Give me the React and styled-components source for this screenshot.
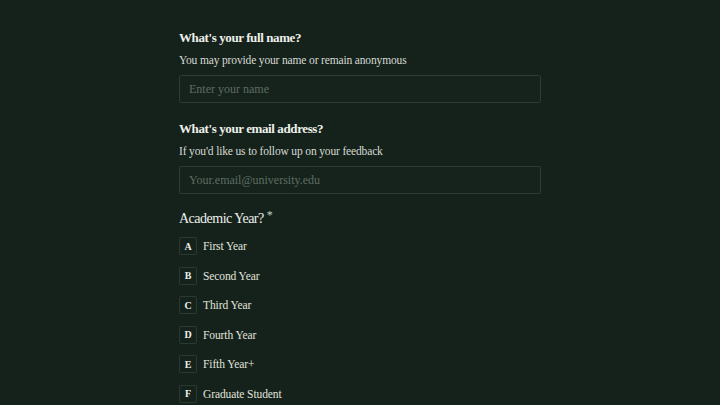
import React from "react";
import styled, { createGlobalStyle } from "styled-components";

const Global = createGlobalStyle`
  html, body { margin: 0; padding: 0; background: #15221c; }
  body { font-family: "Liberation Serif", "DejaVu Serif", serif; color: #e6e9e2; }
`;

const Page = styled.div`
  min-height: 405px;
  background: #15221c;
  display: flex;
  justify-content: center;
  padding-top: 28px;
  box-sizing: border-box;
`;

const Form = styled.div`
  width: 362px;
  display: flex;
  flex-direction: column;
`;

const Field = styled.div`
  display: flex;
  flex-direction: column;
  margin-bottom: ${(p) => p.$mb || 15}px;
`;

const Heading = styled.h2`
  margin: 0 0 ${(p) => p.$gap ?? 3}px;
  font-size: ${(p) => p.$size || 13}px;
  line-height: ${(p) => p.$lh || 20}px;
  font-weight: ${(p) => p.$weight || 700};
  letter-spacing: ${(p) => p.$ls ?? -0.4}px;
  color: #eef0ea;
`;

const Star = styled.sup`
  font-size: 12px;
  font-weight: 400;
  color: #c9cec5;
  margin-left: 3px;
  vertical-align: 4px;
  line-height: 0;
`;

const Sub = styled.p`
  margin: 0 0 6px;
  font-size: 11.5px;
  letter-spacing: -0.15px;
  line-height: 18px;
  color: #d6dad2;
`;

const Input = styled.input`
  box-sizing: border-box;
  height: 28px;
  width: 100%;
  background: #16231d;
  border: 1px solid #2b3c30;
  border-radius: 2px;
  padding: 0 9px;
  font-family: inherit;
  font-size: 12px;
  color: #e6e9e2;
  outline: none;
  &::placeholder { color: #5d6d61; }
`;

const Options = styled.div`
  display: flex;
  flex-direction: column;
  gap: 11.6px;
  margin-top: 7px;
`;

const Option = styled.div`
  display: flex;
  align-items: center;
  gap: 6px;
  height: 18px;
`;

const Key = styled.span`
  box-sizing: border-box;
  width: 18px;
  height: 18px;
  border: 1px solid #2a3a2f;
  border-radius: 2px;
  display: flex;
  align-items: center;
  justify-content: center;
  font-size: 10px;
  font-weight: 700;
  color: #eef0ea;
`;

const Label = styled.span`
  font-size: 11.5px;
  letter-spacing: -0.1px;
  color: #e0e4dc;
`;

const years = ["First Year", "Second Year", "Third Year", "Fourth Year", "Fifth Year+", "Graduate Student"];

export default function App() {
  return (
    <>
      <Global />
      <Page>
        <Form>
          <Field $mb={16}>
            <Heading>What's your full name?</Heading>
            <Sub>You may provide your name or remain anonymous</Sub>
            <Input placeholder="Enter your name" />
          </Field>
          <Field $mb={14}>
            <Heading>What's your email address?</Heading>
            <Sub>If you'd like us to follow up on your feedback</Sub>
            <Input placeholder="Your.email@university.edu" />
          </Field>
          <Field>
            <Heading $size={14} $lh={22} $weight={400} $ls={-0.5} $gap={0}>
              Academic Year?<Star>*</Star>
            </Heading>
            <Options>
              {years.map((y, i) => (
                <Option key={y}>
                  <Key>{String.fromCharCode(65 + i)}</Key>
                  <Label>{y}</Label>
                </Option>
              ))}
            </Options>
          </Field>
        </Form>
      </Page>
    </>
  );
}
